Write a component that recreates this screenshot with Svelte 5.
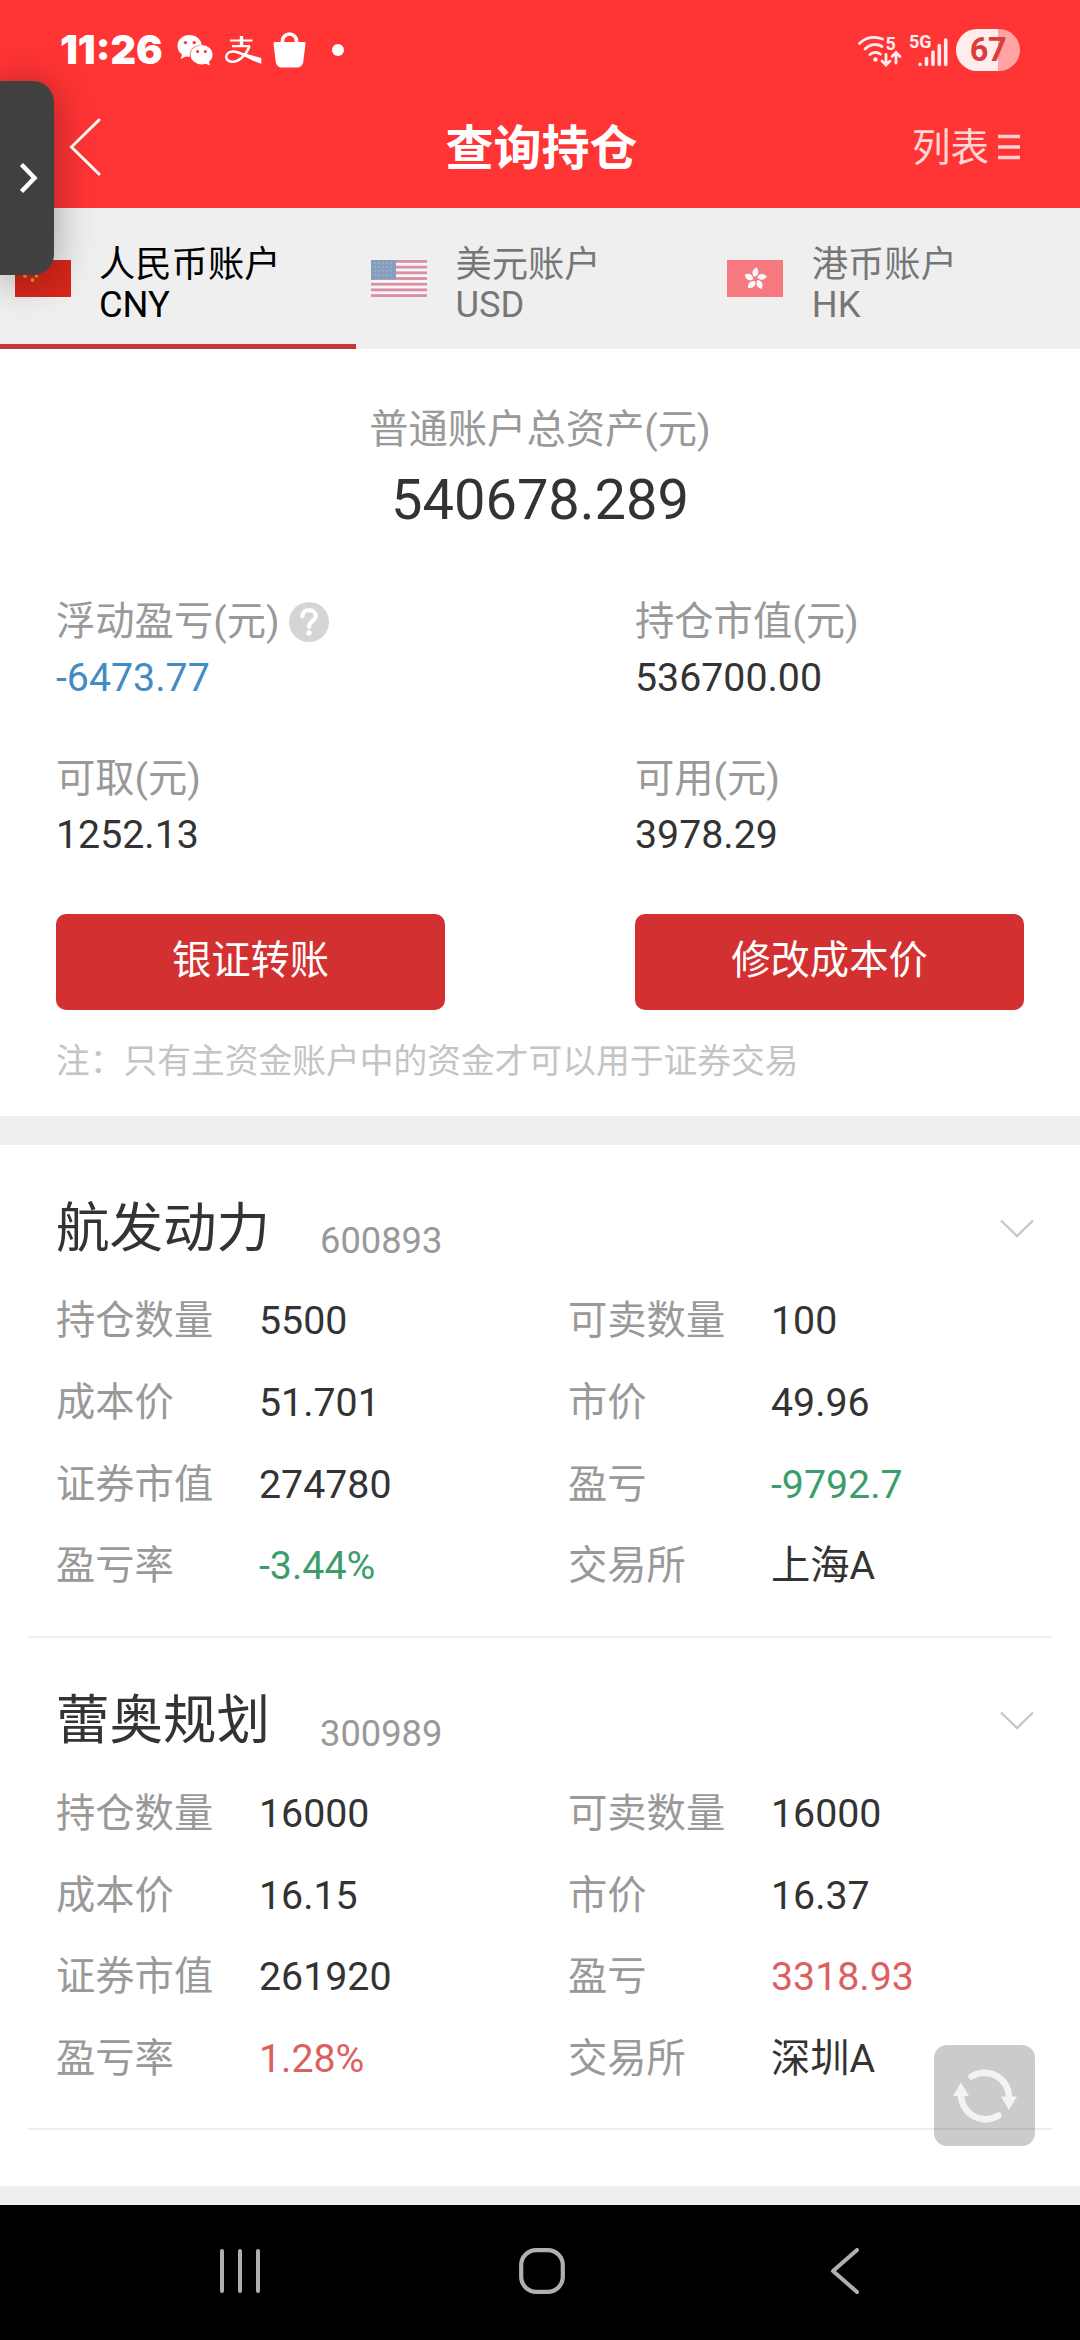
<script lang="ts">
	type Tone = 'up' | 'down' | 'blue';
	type Field = { label: string; value: string; tone?: Tone; help?: boolean };
	type Holding = { name: string; code: string; fields: Field[] };

	const tabs = [
		{ id: 'cn', name: '人民币账户', code: 'CNY' },
		{ id: 'us', name: '美元账户', code: 'USD' },
		{ id: 'hk', name: '港币账户', code: 'HK' }
	];

	let activeTab = $state('cn');

	const summary: Field[] = [
		{ label: '浮动盈亏(元)', value: '-6473.77', tone: 'blue', help: true },
		{ label: '持仓市值(元)', value: '536700.00' },
		{ label: '可取(元)', value: '1252.13' },
		{ label: '可用(元)', value: '3978.29' }
	];

	const holdings: Holding[] = [
		{
			name: '航发动力',
			code: '600893',
			fields: [
				{ label: '持仓数量', value: '5500' },
				{ label: '可卖数量', value: '100' },
				{ label: '成本价', value: '51.701' },
				{ label: '市价', value: '49.96' },
				{ label: '证券市值', value: '274780' },
				{ label: '盈亏', value: '-9792.7', tone: 'down' },
				{ label: '盈亏率', value: '-3.44%', tone: 'down' },
				{ label: '交易所', value: '上海A' }
			]
		},
		{
			name: '蕾奥规划',
			code: '300989',
			fields: [
				{ label: '持仓数量', value: '16000' },
				{ label: '可卖数量', value: '16000' },
				{ label: '成本价', value: '16.15' },
				{ label: '市价', value: '16.37' },
				{ label: '证券市值', value: '261920' },
				{ label: '盈亏', value: '3318.93', tone: 'up' },
				{ label: '盈亏率', value: '1.28%', tone: 'up' },
				{ label: '交易所', value: '深圳A' }
			]
		}
	];

	const stripes = [0, 2, 4, 6, 8, 10, 12];
	const petals = [0, 72, 144, 216, 288];
</script>

<div class="screen">
	<header class="top">
		<div class="status">
			<span class="clock">11:26</span>
			<svg class="wechat" width="36" height="32" viewBox="0 0 36 32">
				<path
					fill="#fff"
					d="M12.5 1C5.6 1 .5 5.8.5 11.9c0 3.400 1.700 6.300 4.400 8.300L3.800 25l5-2.600c1.300.3 2.600.4 4 .4C12 15.500 17.500 10.500 24.800 10.700 23.800 5 18.800 1 12.500 1z"
				/>
				<ellipse cx="24.500" cy="20.700" rx="11" ry="9.700" fill="#fff" />
				<path fill="#fff" d="M27 29l6 2.500-1.200-5z" />
				<g fill="#f33">
					<circle cx="8.400" cy="8.600" r="1.700" />
					<circle cx="17.200" cy="8.600" r="1.700" />
					<circle cx="20.700" cy="17.500" r="1.500" />
					<circle cx="28.300" cy="17.500" r="1.500" />
				</g>
			</svg>
			<svg class="alipay" width="37" height="28" viewBox="0 0 37 28" fill="none" stroke="#fff">
				<path stroke-width="2.200" d="M5 4.500h22.500M7 10.200h18" />
				<path stroke-width="3.400" d="M16.500 0v10.500" />
				<path
					stroke-width="2.500"
					d="M24.500 10c-1.800 5-4.500 9-8 12-3.500 3-7 4.200-10 3.700-3.500-.5-5.300-2.500-5.200-5.200.2-3 3-4.900 6.700-4.900 4 0 9 2.400 14 4.700"
				/>
				<path fill="#fff" stroke="none" d="M18 17l18.300 5v5.800C29.500 25.500 22.500 22 17 19z" />
			</svg>
			<svg class="bag" width="33" height="36" viewBox="0 0 33 36">
				<path fill="none" stroke="#fff" stroke-width="3.600" d="M9.500 11V9a7 7 0 0 1 14 0v2" />
				<path
					fill="#fff"
					d="M2 10h29a1.500 1.500 0 0 1 1.500 1.700l-2.300 18.500a6 6 0 0 1-6 5.300H8.800a6 6 0 0 1-6-5.300L.5 11.700A1.500 1.500 0 0 1 2 10z"
				/>
			</svg>
			<span class="dot"></span>

			<div class="status-right">
				<svg class="signal" width="94" height="34" viewBox="0 0 94 34" fill="none" stroke="#ffeded">
					<g stroke-width="2.800" stroke-linecap="round">
						<path d="M2.500 10.500C9 4 18 3 25.500 6" />
						<path d="M8 16c5-5 12-5.800 17-2.500" />
						<path d="M13 21.500c3-2.800 7.500-2.800 10.500-.3" />
						<path d="M29 21.500v10M25 28l4 4 4-4M39 30V20M35 23.500l4-4 4 4" />
					</g>
					<circle cx="18.500" cy="26.500" r="2.200" fill="#ffeded" stroke="none" />
					<text class="wifi-text" x="28.500" y="17">5</text>
					<text class="net-text" x="52" y="15">5G</text>
					<g stroke-width="3.600" stroke-linecap="round">
						<path d="M63 31.300v.1M69.500 25.500v6M76 19v12.500M82.300 12.500v19M88.700 7v24.500" />
					</g>
				</svg>
				<span class="battery">67</span>
			</div>
		</div>

		<div class="titlebar">
			<button class="back" aria-label="返回">
				<svg width="32" height="58" viewBox="0 0 32 58">
					<path d="M30 2L2.500 29 30 56" fill="none" stroke="#fff" stroke-width="3" stroke-linecap="round" />
				</svg>
			</button>
			<h1>查询持仓</h1>
			<button class="list-link">
				<span>列表</span>
				<svg width="22" height="26" viewBox="0 0 22 26">
					<path d="M0 2.500h22M0 13h22M0 23.500h22" stroke="#ffd0d0" stroke-width="3.400" />
				</svg>
			</button>
		</div>
	</header>

	<nav class="tabs">
		{#each tabs as tab (tab.id)}
			<button class="tab" class:active={tab.id === activeTab} onclick={() => (activeTab = tab.id)}>
				<svg class="flag" width="56" height="37" viewBox="0 0 56 37">
					{#if tab.id === 'cn'}
						<rect width="56" height="37" fill="#d8261c" />
						<g fill="#f59a20">
							<circle cx="10" cy="9" r="5" />
							<circle cx="20" cy="4" r="1.800" />
							<circle cx="21.500" cy="16" r="1.700" />
							<circle cx="17.500" cy="20" r="1.900" />
							<circle cx="10" cy="16" r="1.900" />
						</g>
					{:else if tab.id === 'us'}
						<rect width="56" height="37" fill="#fff" />
						{#each stripes as row}
							<rect y={row * 2.846} width="56" height="2.846" fill="#c8315a" />
						{/each}
						<rect width="25" height="19.500" fill="#204f8e" />
						<g fill="#7d9cc4">
							{#each [3, 7, 11, 15] as y}
								{#each [3, 7, 11, 15, 19] as x}
									<circle cx={x + 1} cy={y} r=".7" />
								{/each}
							{/each}
						</g>
					{:else}
						<rect width="56" height="37" fill="#fb0610" />
						<g transform="translate(28.500 19)" fill="#fff">
							{#each petals as angle}
								<path d="M-1-2C-5-5-3-10 1-11.500 3.500-8.500 4-4.500-1-2z" transform="rotate({angle})" />
							{/each}
						</g>
					{/if}
				</svg>
				<span class="tab-text">
					<span>{tab.name}</span>
					<span>{tab.code}</span>
				</span>
			</button>
		{/each}
	</nav>

	<section class="assets">
		<div class="total-label">普通账户总资产(元)</div>
		<div class="total">540678.289</div>

		<div class="summary">
			{#each summary as item}
				<div class="summary-item">
					<div class="label">
						{item.label}
						{#if item.help}
							<svg width="40" height="40" viewBox="0 0 40 40">
								<circle cx="20" cy="20" r="20" fill="#d5d5d5" />
								<path
									d="M13.300 14.500c.2-4 3-6.300 6.700-6.300s6.700 2.300 6.700 5.800c0 5-6.700 5-6.700 11"
									fill="none"
									stroke="#fff"
									stroke-width="4.200"
									stroke-linecap="round"
								/>
								<circle cx="20" cy="31" r="2.700" fill="#fff" />
							</svg>
						{/if}
					</div>
					<div class="amount {item.tone ?? ''}">{item.value}</div>
				</div>
			{/each}
			<button class="primary">银证转账</button>
			<button class="primary">修改成本价</button>
		</div>

		<p class="note">注：只有主资金账户中的资金才可以用于证券交易</p>
	</section>

	<main class="holdings">
		{#each holdings as stock (stock.code)}
			<article class="holding">
				<div class="holding-head">
					<h2>{stock.name}</h2>
					<span class="code">{stock.code}</span>
					<svg class="chevron" width="34" height="20" viewBox="0 0 34 20">
						<path d="M1 1.500l16 15.500 16-15.500" fill="none" stroke="#c8c8c8" stroke-width="2.400" />
					</svg>
				</div>
				<div class="fields">
					{#each stock.fields as field}
						<div class="field">
							<span class="label">{field.label}</span>
							<span class="value {field.tone ?? ''}">{field.value}</span>
						</div>
					{/each}
				</div>
			</article>
		{/each}
	</main>

	<footer class="system-nav">
		<svg width="40" height="46" viewBox="0 0 40 46">
			<path d="M2 3v40M20 3v40M38 3v40" stroke="#b0b0b0" stroke-width="4" stroke-linecap="round" />
		</svg>
		<svg class="home" width="46" height="46" viewBox="0 0 46 46">
			<rect x="2.200" y="2.200" width="41.600" height="41.600" rx="15" fill="none" stroke="#b0b0b0" stroke-width="4.200" />
		</svg>
		<svg width="30" height="46" viewBox="0 0 30 46">
			<path d="M27 2L3 23l24 21" fill="none" stroke="#b0b0b0" stroke-width="4" stroke-linecap="round" stroke-linejoin="round" />
		</svg>
	</footer>

	<button class="drawer" aria-label="展开">
		<svg width="19" height="32" viewBox="0 0 19 32">
			<path d="M2.500 2.500L15.500 16l-13 13.500" fill="none" stroke="#fff" stroke-width="4.500" />
		</svg>
	</button>

	<button class="refresh" aria-label="刷新">
		<svg width="64" height="58" viewBox="0 0 64 58">
			<g fill="none" stroke="#f3f3f3" stroke-width="6.500" stroke-linecap="round">
				<path d="M18.500 9.500A24.500 24.500 0 0 1 56 31" />
				<path d="M45.500 48.500A24.500 24.500 0 0 1 8 27" />
			</g>
			<path d="M48 29.500h16L56 43zM0 29h16L8 15.500z" fill="#f3f3f3" />
		</svg>
	</button>
</div>

<style>
	:global(body) {
		margin: 0;
		background: #000;
	}

	.screen {
		position: relative;
		display: flex;
		flex-direction: column;
		width: 1080px;
		height: 2340px;
		overflow: hidden;
		background: #eee;
		color: #333;
		font-family: Roboto, 'Noto Sans CJK SC', sans-serif;
	}

	button {
		margin: 0;
		padding: 0;
		border: 0;
		background: none;
		color: inherit;
		font: inherit;
	}

	svg {
		display: block;
		flex-shrink: 0;
	}

	.top {
		height: 208px;
		background: #ff3434;
		color: #fff;
	}

	.status {
		display: flex;
		align-items: center;
		height: 88px;
		padding: 12px 60px 0 60px;
		box-sizing: border-box;
	}

	.clock {
		width: 117px;
		font-family: Inter, sans-serif;
		font-size: 39.5px;
		font-weight: 900;
		white-space: nowrap;
	}

	.alipay {
		margin-left: 12px;
	}

	.bag {
		margin-left: 11px;
	}

	.dot {
		width: 12px;
		height: 12px;
		margin-left: 26px;
		border-radius: 50%;
		background: #fff;
	}

	.status-right {
		display: flex;
		align-items: center;
		gap: 5px;
		margin-left: auto;
	}

	.signal {
		overflow: visible;
	}

	.wifi-text,
	.net-text {
		fill: #ffeded;
		stroke: none;
		font-size: 18px;
		font-weight: 700;
	}

	.battery {
		width: 64px;
		height: 42px;
		border-radius: 21px;
		background: linear-gradient(to right, #ffeded 42px, #ffa3a3 42px);
		color: #db3d3d;
		font-size: 32.5px;
		font-weight: 700;
		letter-spacing: -0.5px;
		line-height: 43px;
		text-align: center;
	}

	.titlebar {
		display: grid;
		grid-template-columns: 1fr auto 1fr;
		align-items: center;
		height: 118px;
		padding: 0 60px 0 63px;
	}

	.back {
		justify-self: start;
		margin-left: 6px;
	}

	h1 {
		margin: 0;
		padding-bottom: 7px;
		font-size: 48px;
		font-weight: 700;
	}

	.list-link {
		display: flex;
		align-items: center;
		justify-self: end;
		gap: 9px;
		font-size: 38.5px;
		color: #ffd6d6;
	}

	.list-link span {
		padding-bottom: 6px;
	}

	.tabs {
		display: flex;
		height: 141px;
		background: #efefef;
	}

	.tab {
		display: flex;
		align-items: center;
		width: 33%;
		padding: 0 0 0 14.5px;
		box-sizing: border-box;
		border-bottom: 5px solid transparent;
		opacity: 0.5;
		color: #000;
		text-align: left;
	}

	.tab.active {
		border-bottom-color: #c83737;
		opacity: 1;
	}

	.tab-text {
		display: flex;
		flex-direction: column;
		margin: 17px 0 0 28.5px;
		font-size: 36.3px;
		line-height: 39.5px;
	}

	.flag {
		margin-top: 4px;
	}

	.assets {
		height: 767px;
		padding: 53px 56px 0;
		box-sizing: border-box;
		background: #fff;
	}

	.total-label {
		font-size: 39.3px;
		line-height: 56px;
		text-align: center;
		color: #999;
	}

	.total {
		font-size: 56px;
		line-height: 84px;
		text-align: center;
	}

	.summary {
		display: grid;
		grid-template-columns: 389px 389px;
		justify-content: space-between;
		margin-top: 52px;
	}

	.summary-item {
		height: 157px;
		font-size: 39.3px;
		line-height: 56px;
	}

	.label {
		display: flex;
		align-items: center;
		gap: 9px;
		color: #999;
	}

	.blue {
		color: #438cc2;
	}

	.up {
		color: #dc6060;
	}

	.down {
		color: #3b9d6b;
	}

	.primary {
		height: 96px;
		margin-top: 6px;
		padding-bottom: 11px;
		border-radius: 10px;
		background: #d33131;
		color: #fff;
		font-size: 39.3px;
	}

	.note {
		margin: 26px 0 0;
		font-size: 33.75px;
		line-height: 52px;
		color: #c4c4c4;
	}

	.holdings {
		height: 1041px;
		margin-top: 29px;
		box-sizing: border-box;
		background: #fff;
	}

	.holding {
		height: 492.5px;
		margin: 0 28px;
		padding: 0 18px 0 28px;
		box-sizing: border-box;
		border-bottom: 2px solid #eee;
	}

	.holding-head {
		display: flex;
		align-items: center;
		height: 135.500px;
		padding-top: 32px;
		box-sizing: border-box;
	}

	h2 {
		margin: 0;
		font-size: 53.5px;
		font-weight: 400;
		line-height: 80px;
	}

	.code {
		margin: 24px 0 0 50px;
		font-size: 36.3px;
		color: #999;
	}

	.chevron {
		margin-left: auto;
	}

	.fields {
		display: grid;
		grid-template-columns: 512px 1fr;
		grid-auto-rows: 81.7px;
		font-size: 39.3px;
		line-height: 56px;
	}

	.field {
		display: flex;
		align-items: center;
	}

	.field .label {
		width: 203px;
	}

	.system-nav {
		display: flex;
		align-items: center;
		justify-content: space-between;
		height: 135px;
		margin-top: auto;
		padding: 0 220px 3px;
		box-sizing: border-box;
		background: #000;
	}

	.home {
		margin-right: 6px;
	}

	/* floating controls over the page */
	.drawer {
		position: absolute;
		top: 81px;
		left: 0;
		display: flex;
		align-items: center;
		width: 54px;
		height: 194px;
		padding-left: 19px;
		border-radius: 0 21px 21px 0;
		background: #404040;
		box-shadow: 0 4px 40px rgba(0, 0, 0, 0.35);
	}

	.refresh {
		position: absolute;
		top: 2045px;
		left: 934px;
		display: grid;
		place-items: center;
		width: 101px;
		height: 101px;
		border-radius: 13px;
		background: rgba(0, 0, 0, 0.205);
	}
</style>
